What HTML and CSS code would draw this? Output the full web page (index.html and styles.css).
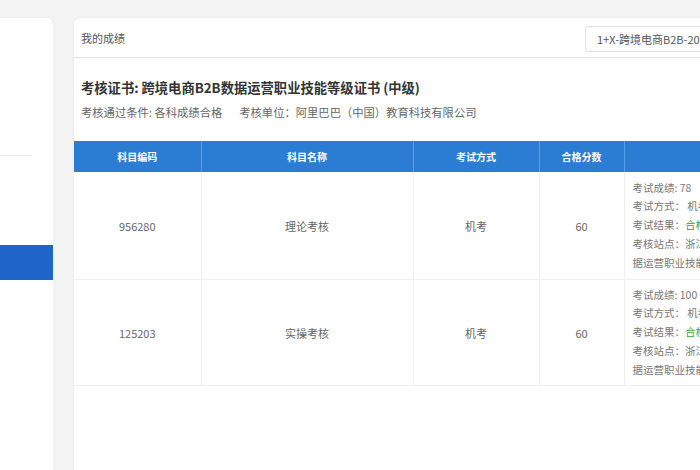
FILE: index.html
```html
<!DOCTYPE html>
<html lang="zh-CN">
<head>
<meta charset="utf-8">
<title>我的成绩</title>
<link rel="stylesheet" href="styles.css">
</head>
<body>
<div class="page">
  <aside class="sidebar">
    <div class="side-ghost"></div>
    <div class="side-divider"></div>
    <div class="side-active"></div>
  </aside>
  <main class="card">
    <header class="card-head">
      <span class="card-title">我的成绩</span>
      <div class="select">1+X-跨境电商B2B-2021</div>
    </header>
    <section class="info">
      <h1 class="cert">考核证书: 跨境电商B2B数据运营职业技能等级证书 (中级)</h1>
      <p class="meta"><span>考核通过条件: 各科成绩合格</span><span>考核单位：阿里巴巴（中国）教育科技有限公司</span></p>
    </section>
    <div class="table-wrap">
    <table class="grades">
      <colgroup>
        <col class="c1"><col class="c2"><col class="c3"><col class="c4"><col class="c5">
      </colgroup>
      <thead>
        <tr><th>科目编码</th><th>科目名称</th><th>考试方式</th><th>合格分数</th><th>考试详情</th></tr>
      </thead>
      <tbody>
        <tr class="r1">
          <td>956280</td><td>理论考核</td><td>机考</td><td>60</td>
          <td class="detail">
            <div>考试成绩: 78</div>
            <div>考试方式： 机考</div>
            <div>考试结果：<span class="pass">合格</span></div>
            <div>考核站点：浙江商业职业技术学院跨境电商B2B数</div>
            <div>据运营职业技能等级证书考核站</div>
          </td>
        </tr>
        <tr class="r2">
          <td>125203</td><td>实操考核</td><td>机考</td><td>60</td>
          <td class="detail">
            <div>考试成绩: 100</div>
            <div>考试方式： 机考</div>
            <div>考试结果：<span class="pass">合格</span></div>
            <div>考核站点：浙江商业职业技术学院跨境电商B2B数</div>
            <div>据运营职业技能等级证书考核站</div>
          </td>
        </tr>
      </tbody>
    </table>
    </div>
  </main>
</div>
</body>
</html>
```

FILE: styles.css
```css
html, body {
  margin: 0;
  padding: 0;
}
body {
  background: #f3f3f3;
  width: 700px;
  height: 470px;
  overflow: hidden;
  font-family: "Noto Sans CJK SC", "Noto Sans", sans-serif;
  color: #555;
}
.page {
  display: flex;
  gap: 20px;
  padding-top: 17px;
  width: 900px;
}
.sidebar {
  flex: 0 0 53px;
  margin-top: 1px;
  height: 460px;
  background: #fff;
  border-radius: 0 6px 0 0;
  box-shadow: 0 0 3px rgba(0,0,0,0.04);
}
.side-ghost {
  height: 137px;
}
.side-divider {
  width: 32px;
  height: 1px;
  background: #e8e8e8;
}
.side-active {
  margin-top: 89px;
  height: 35px;
  background: #1f64c8;
}
.card {
  flex: 0 0 680px;
  min-width: 0;
  height: 460px;
  background: #fff;
  border: 1px solid #ececec;
  border-right: none;
  border-radius: 6px 0 0 0;
  box-sizing: border-box;
  overflow: hidden;
}
.card-head {
  height: 40px;
  box-sizing: border-box;
  border-bottom: 1px solid #e3e3e3;
  display: flex;
  align-items: center;
  justify-content: space-between;
  padding: 0 8px 0 7px;
}
.card-title {
  font-size: 11px;
  color: #555;
}
.select {
  width: 160px;
  height: 26px;
  box-sizing: border-box;
  border: 1px solid #e0e0e0;
  border-radius: 3px;
  padding-left: 11px;
  font-size: 11px;
  line-height: 24px;
  color: #555;
  white-space: nowrap;
  overflow: hidden;
  margin-top: 2px;
}
.info {
  padding: 20px 7px 21px;
}
.cert {
  margin: 0;
  font-size: 13.3px;
  line-height: 20px;
  font-weight: bold;
  color: #333;
}
.meta {
  margin: 6px 0 0;
  font-size: 11.3px;
  line-height: 16px;
  color: #666;
  display: flex;
  gap: 17px;
}
.table-wrap {
  width: 100%;
  overflow: hidden;
}
.grades {
  border-collapse: collapse;
  table-layout: fixed;
  width: 750px;
  font-size: 11px;
  color: #666;
}
.c1 { width: 127px; }
.c2 { width: 212px; }
.c3 { width: 126px; }
.c4 { width: 85px; }
.c5 { width: 200px; }
.grades th {
  height: 31px;
  background: #2a7dd3;
  color: #fff;
  font-weight: bold;
  font-size: 10px;
  border-left: 1px solid #5ba0e4;
  padding: 0;
}
.grades th:first-child {
  border-left: none;
}
.grades td {
  text-align: center;
  border-left: 1px solid #eeeeee;
  border-bottom: 1px solid #eeeeee;
  padding: 0;
}
.grades td:first-child {
  border-left: none;
}
.r1 td { height: 107px; }
.r2 td { height: 105px; }
.grades td.detail {
  text-align: left;
  padding: 0 8px;
  line-height: 18.75px;
  white-space: nowrap;
  overflow: hidden;
  font-size: 10.5px;
  color: #777;
}
.pass {
  color: #3c9a3c;
}
```
